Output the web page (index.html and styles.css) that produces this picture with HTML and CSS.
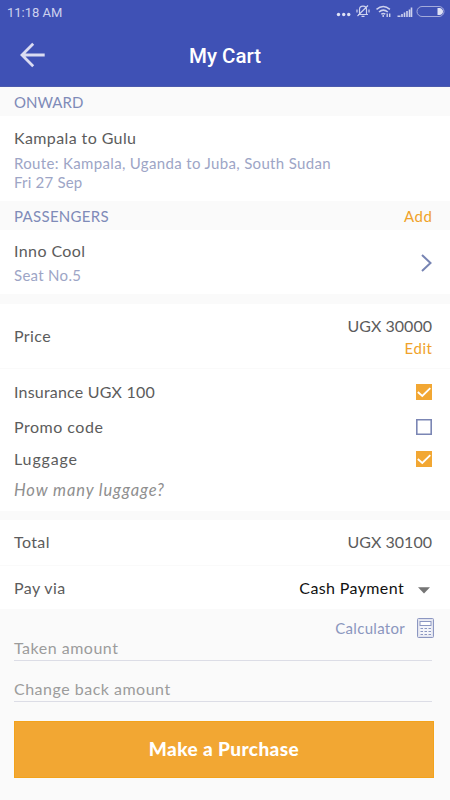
FILE: index.html
```html
<!DOCTYPE html>
<html lang="en">
<head>
<meta charset="utf-8">
<meta name="viewport" content="width=device-width, initial-scale=1">
<title>My Cart</title>
<link rel="stylesheet" href="styles.css">
</head>
<body>
<header class="header">
  <div class="status">
    <span class="time">11:18 AM</span>
    <svg class="status-icons" width="110" height="16" viewBox="0 0 110 16" fill="none" stroke="#cdd1ee">
      <g fill="#dfe2f5" stroke="none"><circle cx="2.500" cy="11.500" r="1.700"/><circle cx="7.700" cy="11.500" r="1.700"/><circle cx="12.700" cy="11.500" r="1.700"/></g>
      <path d="M22 11.500h10M23.500 11V6.500c0-4.500 7-4.500 7 0V11M25.500 13.300h3M21 6.500v3M33 6.500v3M21.500 13 32 2.500" stroke-width="1.200"/>
      <path d="M40.500 6.300q6.700-5.500 13.400 0M43 9q4.200-3.700 8.800 0M45.300 11.200q1.900-1.600 4 0" stroke-width="1.500"/>
      <path d="M47.200 12v2M51.200 10.500V14M53.700 10.500V14" stroke-width="1.400"/>
      <path d="M61.500 13.300h3M66 14v-3M68.500 14V9.500M71 14V8M73.500 14V6.500M75.500 14V4.500" stroke-width="1.600"/>
      <rect x="81" y="3.500" width="27" height="10" rx="5" stroke="#a3aadb"/>
      <path d="M101.500 5h2.500q3 1 3 3.500T104 12h-2.500z" fill="#dfe2f5" stroke="none"/>
    </svg>
  </div>
  <div class="bar">
    <svg class="back" width="26" height="26" viewBox="0 0 26 26" fill="none" stroke="#dadcf2" stroke-width="2.800"><path d="M24.700 13H2M13.200 1.800 2 13 13.200 24.200"/></svg>
    <h1 class="title">My Cart</h1>
  </div>
</header>
<main>
  <div class="strip"><span class="onward">ONWARD</span></div>
  <section class="trip">
    <div class="name kampala">Kampala to Gulu</div>
    <div class="sub route">Route: Kampala, Uganda to Juba, South Sudan</div>
    <div class="sub date">Fri 27 Sep</div>
  </section>
  <div class="strip"><span class="passengers">PASSENGERS</span><a class="link add">Add</a></div>
  <section class="passenger">
    <div>
      <div class="name inno">Inno Cool</div>
      <div class="sub seat">Seat No.5</div>
    </div>
    <svg class="chevron" width="12" height="18" viewBox="0 0 12 18" fill="none" stroke="#7784b3" stroke-width="2"><path d="m2 1 8.500 8L2 17"/></svg>
  </section>
  <section class="price">
    <span class="label price-label">Price</span>
    <div class="price-side"><span class="label amount">UGX 30000</span><a class="link edit">Edit</a></div>
  </section>
  <section class="options">
    <div class="option"><span class="label insurance">Insurance UGX 100</span>
      <svg class="box" width="16" height="16" viewBox="0 0 16 16"><path d="M0 0h16v16H0z" fill="#f2a733"/><path d="m1.800 8 4.500 4L14.300 4.200" fill="none" stroke="#fff" stroke-width="1.800"/></svg></div>
    <div class="option promo-row"><span class="label promo">Promo code</span>
      <svg class="box" width="16" height="16" viewBox="0 0 16 16"><path d="M.800.800h14.400v14.400H.800z" fill="#fff" stroke="#7b86b4" stroke-width="1.600"/></svg></div>
    <div class="option"><span class="label luggage">Luggage</span>
      <svg class="box" width="16" height="16" viewBox="0 0 16 16"><path d="M0 0h16v16H0z" fill="#f2a733"/><path d="m1.800 8 4.500 4L14.300 4.200" fill="none" stroke="#fff" stroke-width="1.800"/></svg></div>
    <div class="hint">How many luggage?</div>
  </section>
  <section class="row total"><span class="label total-label">Total</span><span class="label amount">UGX 30100</span></section>
  <section class="row pay"><span class="label pay-label">Pay via</span>
    <div class="select"><span class="cash">Cash Payment</span><svg width="12" height="7" viewBox="0 0 12 7"><path d="M0 .300h12L6 6.500z" fill="#757575"/></svg></div>
  </section>
  <section class="form">
    <div class="calculator"><span class="calc-label">Calculator</span>
      <svg width="17" height="20" viewBox="0 0 17 20" fill="none" stroke="#8c97c1">
        <rect x=".500" y=".500" width="16" height="19" rx="1" fill="#e2e4ef"/>
        <rect x="2.500" y="2.500" width="12" height="15" fill="#f5f6fa" stroke="none"/>
        <rect x="3" y="3.500" width="11" height="4" fill="#fff"/>
        <path d="M3.500 10.500h10.500M3.500 13.500h10.500M3.500 16.500h10.500" stroke-width="1.200" stroke-dasharray="2.500 1.500"/>
      </svg></div>
    <div class="field taken"><span>Taken amount</span></div>
    <div class="field change"><span>Change back amount</span></div>
    <button class="purchase">Make a Purchase</button>
  </section>
</main>
</body>
</html>
```

FILE: styles.css
```css
* { box-sizing: border-box; }
body {
  margin: 0;
  background: #fafafa;
  color: #5c5c5c;
  font: 16px/20px Lato, "Liberation Sans", sans-serif;
}
svg { display: block; flex: none; }
.header { height: 87px; background: #3f51b5; border-bottom: 1px solid #4c5bad; }
.status { height: 24px; padding: 3px 4px 0 7px; display: flex; justify-content: space-between; }
.time { font: 13px/19px Roboto, sans-serif; color: #cdd1ee; }
.bar { height: 62px; padding: 0 20px; display: grid; grid-template-columns: 26px 1fr 26px; align-items: center; }
.title { margin: 2px 0 0; text-align: center; font: 500 20.5px/26px Roboto, sans-serif; color: #fff; }
.strip { height: 29px; padding: 5px 18px 0 14px; display: flex; justify-content: space-between; color: #7f8bb8; font-size: 15px; }
.link { color: #f0a22a; font-size: 15px; letter-spacing: .6px; margin-right: -.6px; }
.name, .label { color: #5c5c5c; white-space: nowrap; letter-spacing: .4px; }
.sub { color: #9da5c6; font-size: 15px; line-height: 19px; }
section { background: #fff; }
.trip { height: 85px; padding: 12px 14px 0; }
.route { margin-top: 6px; letter-spacing: .34px; }
.date { letter-spacing: .2px; }
.passenger { height: 64px; padding: 11px 18px 0 14px; display: flex; justify-content: space-between; }
.seat { margin-top: 5px; letter-spacing: .3px; }
.chevron { margin-top: 13px; }
.price { height: 64px; margin-top: 10px; padding: 12px 18px 0 14px; display: flex; justify-content: space-between; }
.price-label { margin-top: 10px; }
.price-side { display: flex; flex-direction: column; align-items: flex-end; gap: 2px; }
.options { height: 142px; margin-top: 1px; padding: 13px 18px 0 14px; }
.option { display: flex; justify-content: space-between; }
.promo-row { margin: 15px 0 12px; }
.box { margin-top: 2px; }
.hint { margin-top: 11px; font-style: italic; font-size: 16.5px; letter-spacing: .9px; color: #8f8f8f; }
.row { display: flex; justify-content: space-between; padding: 12px 18px 0 14px; }
.total { margin-top: 9px; height: 45px; }
.pay { margin-top: 1px; height: 43px; }
.select { display: flex; gap: 14px; color: #111; }
.select svg { margin: 9px 2px 0 0; }
.form { background: #fafafa; padding: 9px 16px 0 14px; }
.calculator { height: 20px; display: flex; justify-content: flex-end; gap: 12px; color: #8b96be; font-size: 15px; }
.field { height: 41px; margin-right: 2px; border-bottom: 1px solid #dcdde6; color: #9c9c9c; letter-spacing: .5px; }
.taken { height: 23px; }
.change { padding-top: 18px; }
.purchase { display: block; width: 420px; height: 57px; margin-top: 19px; padding: 0 0 2px; border: 1px solid #f3a31c; background: #f2a733; color: #fff; font: 900 19px/20px Lato, sans-serif; letter-spacing: .4px; }
.onward { letter-spacing: 0; }
.passengers { letter-spacing: .3px; }
.label.amount { letter-spacing: .03px; }
.label.insurance { letter-spacing: .2px; }
.label.promo { letter-spacing: .5px; }
.label.luggage { letter-spacing: .85px; }
.cash { letter-spacing: .38px; }
.calc-label { letter-spacing: .3px; }
```
